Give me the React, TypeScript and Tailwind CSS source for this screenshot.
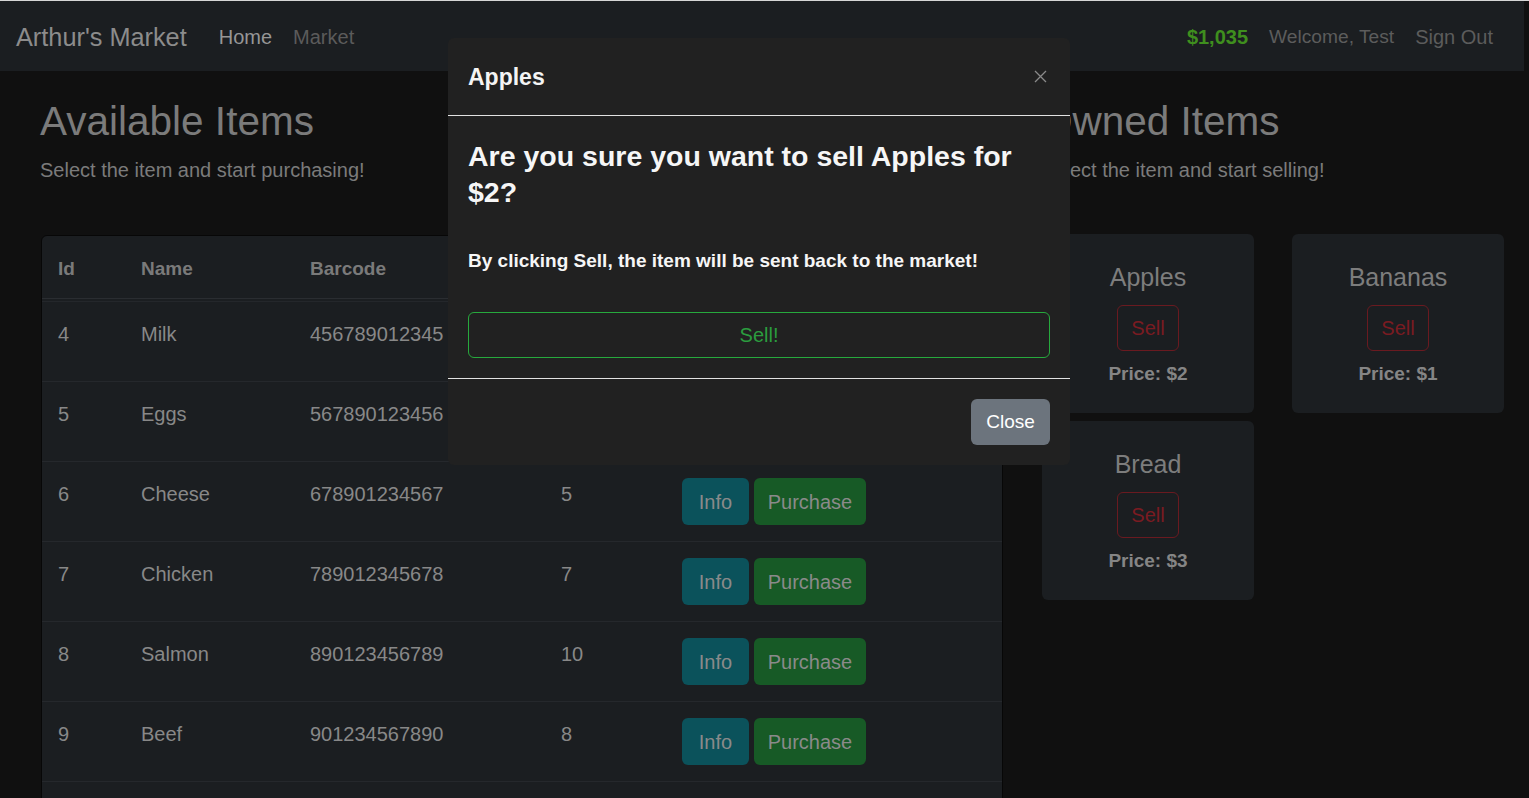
import React from "react";

const rows = [
  { id: 4, name: "Milk", barcode: "456789012345", price: 3 },
  { id: 5, name: "Eggs", barcode: "567890123456", price: 2 },
  { id: 6, name: "Cheese", barcode: "678901234567", price: 5 },
  { id: 7, name: "Chicken", barcode: "789012345678", price: 7 },
  { id: 8, name: "Salmon", barcode: "890123456789", price: 10 },
  { id: 9, name: "Beef", barcode: "901234567890", price: 8 },
];

const owned = [
  { name: "Apples", price: 2 },
  { name: "Bananas", price: 1 },
  { name: "Bread", price: 3 },
];

const gridCols = "grid grid-cols-[82px_169px_251px_121px_1fr]";

function OwnedCard({ name, price }: { name: string; price: number }) {
  return (
    <div className="h-[179px] rounded-[6px] bg-[#1b1e21] flex flex-col items-center pt-[28px]">
      <div className="text-[25px] leading-[30px] text-[#7d7d7d]">{name}</div>
      <div className="mt-[13px] w-[62px] h-[46px] rounded-[6px] border border-[#6a1a20] flex items-center justify-center text-[20px] text-[#7a1b21]">
        Sell
      </div>
      <div className="mt-[8px] text-[19px] leading-[30px] font-bold text-[#858585]">Price: ${price}</div>
    </div>
  );
}

export default function App() {
  return (
    <div
      className="relative w-full h-[798px] overflow-hidden bg-[#101010]"
      style={{ fontFamily: '"Liberation Sans", Arial, sans-serif' }}
    >
      <div className="h-px w-full bg-[#d6d6d6]" />
      {/* Navbar */}
      <nav className="w-[1524px] h-[70px] bg-[#1b1e21] flex items-center pl-[16px] pr-[31px] pt-[2px]">
        <div className="text-[25.3px] leading-[30px] text-[#8c8c8c]">Arthur's Market</div>
        <div className="ml-[32px] text-[20px] text-[#969696]">Home</div>
        <div className="ml-[21px] text-[20px] text-[#5b5b5b]">Market</div>
        <div className="ml-auto flex items-center text-[20px]">
          <div className="font-bold text-[#3f8f1e]">$1,035</div>
          <div className="ml-[21px] text-[19.2px] text-[#5c5c5c]">Welcome, Test</div>
          <div className="ml-[21px] text-[#5c5c5c]">Sign Out</div>
        </div>
      </nav>

      {/* Main */}
      <div className="flex w-[1524px] pt-[26px]">
        <div className="pl-[40px] w-[1003px] shrink-0">
          <h2 className="text-[40.5px] leading-[48px] text-[#7b7b7b]">Available Items</h2>
          <p className="mt-[10px] text-[20px] leading-[30px] text-[#7b7b7b]">Select the item and start purchasing!</p>
          <div className="mt-[50px] ml-px w-[962px] rounded-t-[6px] border border-[#070707] bg-[#1b1e21] text-[20px]">
            <div className={`${gridCols} h-[63px] items-center pt-[5px] border-b border-[#2a2d31] font-bold text-[19px] text-[#7a7a7a]`}>
              <div className="pl-[16px]">Id</div>
              <div className="pl-[17px]">Name</div>
              <div className="pl-[17px]">Barcode</div>
              <div className="pl-[17px]">Price</div>
              <div className="pl-[17px]">Options</div>
            </div>
            <div className="h-[3px] border-b border-[#24272b]" />
            {rows.map((r) => (
              <div key={r.id} className={`${gridCols} h-[80px] border-b border-[#25282c] text-[#888888] leading-[30px]`}>
                <div className="pl-[16px] pt-[17px]">{r.id}</div>
                <div className="pl-[17px] pt-[17px]">{r.name}</div>
                <div className="pl-[17px] pt-[17px]">{r.barcode}</div>
                <div className="pl-[17px] pt-[17px]">{r.price}</div>
                <div className="pl-[17px] pt-[16px] flex items-start gap-[5px]">
                  <div className="w-[67px] h-[47px] rounded-[6px] bg-[#0b525b] flex items-center justify-center text-[#8a8a8a]">
                    Info
                  </div>
                  <div className="w-[112px] h-[47px] rounded-[6px] bg-[#175a26] flex items-center justify-center text-[#8a8a8a]">
                    Purchase
                  </div>
                </div>
              </div>
            ))}
            <div className="h-[80px]" />
          </div>
        </div>

        <div className="ml-[38px] w-[464px] shrink-0">
          <h2 className="text-[40.5px] leading-[48px] text-[#7b7b7b]">Owned Items</h2>
          <p className="mt-[10px] text-[20px] leading-[30px] text-[#7b7b7b]">Select the item and start selling!</p>
          <div className="mt-[49px] grid grid-cols-[212px_212px] gap-x-[38px] gap-y-[8px] pl-px">
            {owned.map((o) => (
              <OwnedCard key={o.name} name={o.name} price={o.price} />
            ))}
          </div>
        </div>
      </div>

      {/* Modal */}
      <div className="absolute left-[448px] top-[38px] w-[622px] rounded-[6px] bg-[#212121] text-white">
        <div className="h-[78px] px-[20px] flex items-center justify-between border-b border-[#e2e2e2]">
          <div className="text-[23px] leading-[30px] font-bold text-[#f4f4f4]">Apples</div>
          <div className="w-[20px] h-[20px] flex items-center justify-center">
            <svg width="13" height="13" viewBox="0 0 13 13">
              <path d="M1 1 L12 12 M12 1 L1 12" stroke="#8a8a8a" strokeWidth="1.3" fill="none" />
            </svg>
          </div>
        </div>
        <div className="px-[20px] pt-[22px] pb-[20px] border-b border-[#e2e2e2]">
          <h4 className="text-[28.5px] leading-[36px] font-bold text-[#f6f6f6]">
            Are you sure you want to sell Apples for $2?
          </h4>
          <div className="mt-[36px] text-[19px] leading-[30px] font-bold text-[#f6f6f6]">
            By clicking Sell, the item will be sent back to the market!
          </div>
          <div className="mt-[36px] h-[46px] w-full rounded-[6px] border border-[#27a93d] flex items-center justify-center text-[20px] text-[#2b9c3e]">
            Sell!
          </div>
        </div>
        <div className="px-[20px] py-[20px] flex justify-end">
          <div className="w-[79px] h-[46px] rounded-[6px] bg-[#6c747d] flex items-center justify-center text-[19px] text-white">
            Close
          </div>
        </div>
      </div>
    </div>
  );
}
